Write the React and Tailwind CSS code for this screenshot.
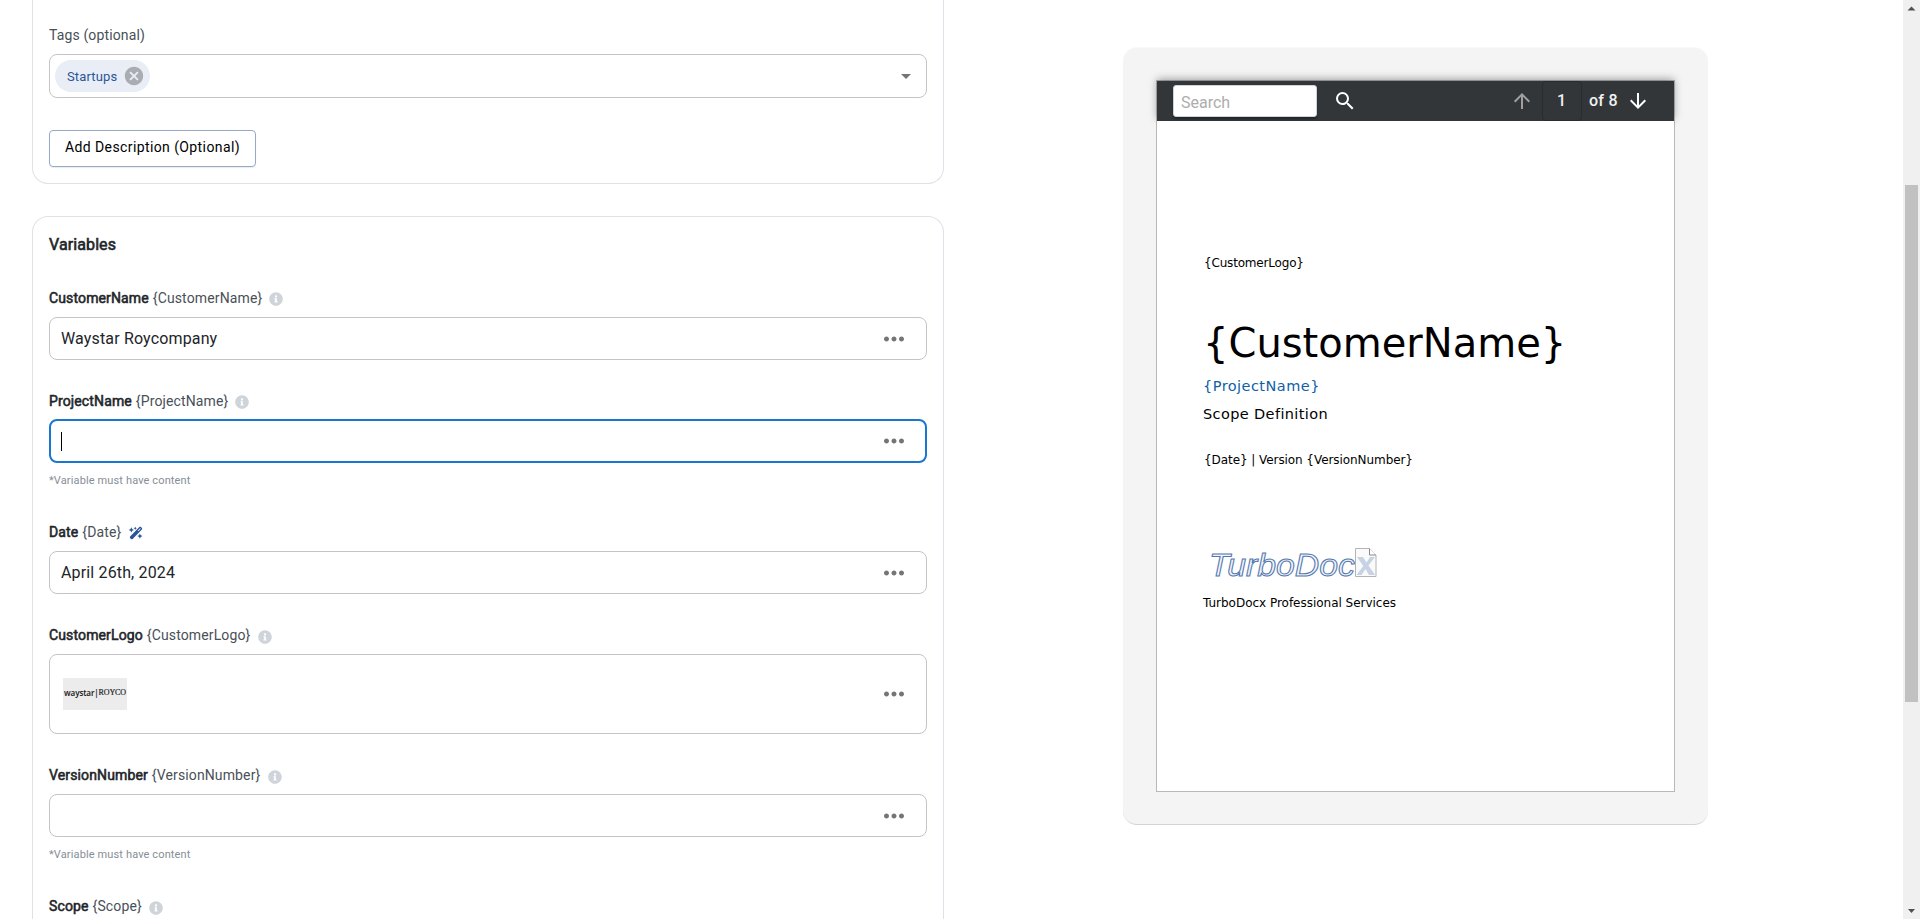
import { FaInfoCircle } from "react-icons/fa";
import { FaWandMagicSparkles } from "react-icons/fa6";
import { MdSearch, MdArrowUpward, MdArrowDownward, MdMoreHoriz, MdArrowDropDown, MdCancel } from "react-icons/md";

function Label({ name, wand, down }) {
  return (
    <div className="flex h-5 items-center whitespace-nowrap text-sm leading-5 tracking-[0.13px]">
      <span className="text-[#212529] [-webkit-text-stroke:0.55px_#212529]">{name}</span>
      <span className="ml-1 text-[#495057]">{"{" + name + "}"}</span>
      {wand ? (
        <FaWandMagicSparkles className="mt-0.5 ml-2 size-3.5 text-[#2b5597]" />
      ) : (
        <FaInfoCircle className={down ? "mt-1 ml-[7.5px] size-3.5 text-[#ced4da]" : "mt-0.5 ml-[7px] size-3.5 text-[#ced4da]"} />
      )}
    </div>
  );
}

function Field({ children, focused, tall }) {
  const kind = focused
    ? "mt-2 h-11 border-2 border-[#1976d2] pl-2.5 pr-4"
    : tall
      ? "mt-[9px] h-20 border border-[#c4c4c4] pl-[13px] pr-[17px]"
      : "mt-[9px] h-[43px] border border-[#c4c4c4] pl-[11px] pr-[17px]";
  return (
    <div className={"flex items-center justify-between rounded-lg " + kind}>
      <div className="flex items-center text-base leading-6 tracking-[0.15px] text-[#212529]">{children}</div>
      <MdMoreHoriz className="size-[30px] text-[#757575]" />
    </div>
  );
}

function Helper() {
  return <div className="mt-[9px] h-[17px] text-[11px] leading-[18px] tracking-[0.13px] text-[#868e96]">*Variable must have content</div>;
}

export default function App() {
  return (
    <div className="flex h-[919px] w-[1920px] overflow-hidden bg-white font-[Roboto,sans-serif]">
      <main className="ml-8 flex w-[912px] flex-col">
        <section className="h-[184px] shrink-0 rounded-b-2xl border border-t-0 border-[#dee2e6] px-4 pt-[25px]">
          <div className="h-5 text-sm leading-5 tracking-[0.13px] text-[#495057]">Tags (optional)</div>
          <div className="mt-[9px] flex h-11 items-center justify-between rounded-lg border border-[#c4c4c4] pr-2 pl-[5px]">
            <div className="flex h-8 w-[95px] items-center rounded-full bg-[#e9eef6] pl-3">
              <span className="pt-px text-[13px] leading-5 tracking-[0.15px] text-[#2b5597]">Startups</span>
              <MdCancel className="ml-1.5 size-[22px] text-[#a9adb3]" />
            </div>
            <MdArrowDropDown className="size-6 text-[#757575]" />
          </div>
          <button className="mt-8 flex h-[37px] w-[207px] items-center justify-center rounded border border-[#95aacb] pb-1 text-sm tracking-[0.4px] text-black shadow-[0_1px_1px_rgba(0,0,0,0.08)]">
            Add Description (Optional)
          </button>
        </section>

        <section className="mt-8 h-[760px] shrink-0 rounded-t-2xl border border-b-0 border-[#dee2e6] px-4 pt-4">
          <h2 className="h-6 text-base leading-6 tracking-[0.1px] text-[#212529] [-webkit-text-stroke:0.6px_#212529]">Variables</h2>
          <div className="mt-[31px]">
            <Label name="CustomerName" />
            <Field>Waystar Roycompany</Field>
          </div>
          <div className="mt-[31px]">
            <Label name="ProjectName" />
            <Field focused>
              <span className="h-[19px] w-px bg-black" />
            </Field>
            <Helper />
          </div>
          <div className="mt-[33px]">
            <Label name="Date" wand />
            <Field>April 26th, 2024</Field>
          </div>
          <div className="mt-[31px]">
            <Label name="CustomerLogo" down />
            <Field tall>
              <span className="flex h-8 w-16 justify-center bg-[#ececec] pt-[9px] text-[8px] leading-3 tracking-[-0.12px] text-[#222]">
                <span className="font-['Noto_Sans',sans-serif] font-semibold">waystar|</span>
                <span className="font-['Liberation_Serif',serif] [-webkit-text-stroke:0.2px_#222]">ROYCO</span>
              </span>
            </Field>
          </div>
          <div className="mt-[31px]">
            <Label name="VersionNumber" down />
            <Field />
            <Helper />
          </div>
          <div className="mt-[33px]">
            <Label name="Scope" down />
          </div>
        </section>
      </main>

      <aside className="mt-[47px] ml-[179px] h-[778px] w-[585px] rounded-[14px] border-t border-b border-t-[#f9f9f9] border-b-[#d4d4d4] bg-[#f4f4f4] px-[33px] pt-8">
        <div className="flex h-[712px] w-[519px] flex-col border border-[#b8b8b8] bg-white">
          <div className="flex h-10 shrink-0 items-center bg-[#323639] pl-4 text-base font-medium text-[#f1f1f1] shadow-[0_-2px_8px_rgba(0,0,0,0.35)]">
            <div className="flex h-8 w-36 items-center rounded-[3px] border border-[#ced4da] bg-white pt-1 pl-[7px] font-normal text-[#adadad] shadow-[0_2px_2px_rgba(0,0,0,0.3)]">Search</div>
            <MdSearch className="ml-4 size-6 text-white" />
            <MdArrowUpward className="ml-[153px] size-6 text-[#a0a0a0]" />
            <div className="ml-2 flex h-10 w-10 items-center justify-center rounded border border-[#292c2f] pr-px">1</div>
            <span className="ml-[7px] w-[28px] tracking-[0.25px] whitespace-nowrap">of 8</span>
            <MdArrowDownward className="ml-[9px] size-6 text-white" />
          </div>
          <div className="flex flex-col bg-white pt-[134px] pl-[46px] font-['DejaVu_Sans',sans-serif] whitespace-nowrap text-black">
            <div className="h-4 pl-px text-xs leading-4 tracking-[-0.18px]">{"{CustomerLogo}"}</div>
            <div className="mt-12 h-12 text-[40px] leading-[48px]">{"{CustomerName}"}</div>
            <div className="mt-[9px] h-5 text-[14.5px] leading-5 tracking-[0.46px] text-[#0f5fa8]">{"{ProjectName}"}</div>
            <div className="mt-2 h-5 text-[14.5px] leading-5 tracking-[0.38px]">Scope Definition</div>
            <div className="mt-7 h-4 pl-px text-xs leading-4 tracking-[-0.07px]">{"{Date} | Version {VersionNumber}"}</div>
            <svg className="mt-[78px] ml-1.5 h-[34px] w-[174px] overflow-visible" viewBox="0 0 174 34">
              <text x="0" y="30" fontFamily="Liberation Sans" fontStyle="italic" fontSize="31" textLength="146" lengthAdjust="spacingAndGlyphs" fill="#f1f5fa" stroke="#5478ae" strokeWidth="1">TurboDoc</text>
              <path d="M146.500 2.500h14l6.500 6.500v21.500h-20.500z" fill="#fafafa" stroke="#b4b4b4" />
              <path d="M160.500 2.500v6.500h6.500" fill="#fff" stroke="#8a8a8a" />
              <path d="M148 11h6l3.500 5.500 3.500-5.500h5l-6.500 8.500 6.500 9.500h-6l-3.500-6-4 6h-5l6.800-9z" fill="#c6d3e5" />
            </svg>
            <div className="mt-[15px] h-4 text-xs leading-4 tracking-[-0.02px]">TurboDocx Professional Services</div>
          </div>
        </div>
      </aside>

      <div className="ml-auto flex w-[17px] flex-col items-center justify-between bg-[#f0f0f0]">
        <svg className="h-[17px] w-[17px]" viewBox="0 0 17 17"><path d="M8.500 6.500l4 4h-8z" fill="#505050" /></svg>
        <div className="mt-[168px] h-[517px] w-[13px] bg-[#c1c1c1]" />
        <svg className="mt-auto h-[17px] w-[17px]" viewBox="0 0 17 17"><path d="M5 7h7l-3.500 4z" fill="#505050" /></svg>
      </div>
    </div>
  );
}
